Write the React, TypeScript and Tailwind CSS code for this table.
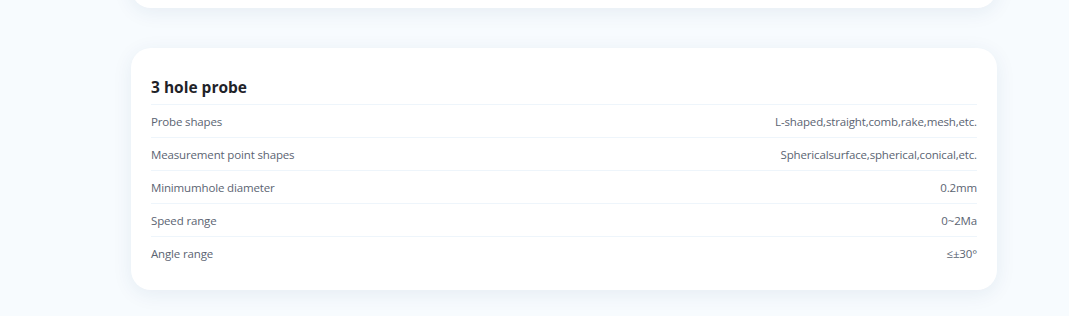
const specs = [
  { label: 'Probe shapes', value: 'L-shaped,straight,comb,rake,mesh,etc.' },
  { label: 'Measurement point shapes', value: 'Sphericalsurface,spherical,conical,etc.' },
  { label: 'Minimumhole diameter', value: '0.2mm' },
  { label: 'Speed range', value: '0~2Ma' },
  { label: 'Angle range', value: '≤±30°' },
]

export default function App() {
  return (
    <div
      className="min-h-[316px] bg-[#f7fbfe] overflow-hidden"
      style={{ fontFamily: '"Open Sans", "Noto Sans", sans-serif' }}
    >
      <div className="ml-[131px] w-[866px] -mt-[60px] flex flex-col gap-10">
        {/* previous card, only its bottom edge shows */}
        <div className="h-[68px] bg-white rounded-[20px] shadow-[0_4px_20px_rgba(30,60,110,0.08)]" />

        <div className="bg-white rounded-[20px] shadow-[0_4px_20px_rgba(30,60,110,0.08)] px-5 pt-7 pb-5">
          <h3 className="text-[15.5px] leading-[22px] font-bold text-[#1f2329] pb-[6px] border-b border-[#eef5fb]">
            3 hole probe
          </h3>
          {specs.map((s, i) => (
            <div
              key={s.label}
              className={`h-[33px] pt-px flex items-center justify-between text-[11.5px] tracking-[-0.15px] text-[#5b6472] ${
                i < specs.length - 1 ? 'border-b border-[#eef5fb]' : ''
              }`}
            >
              <span>{s.label}</span>
              <span>{s.value}</span>
            </div>
          ))}
        </div>
      </div>
    </div>
  )
}
